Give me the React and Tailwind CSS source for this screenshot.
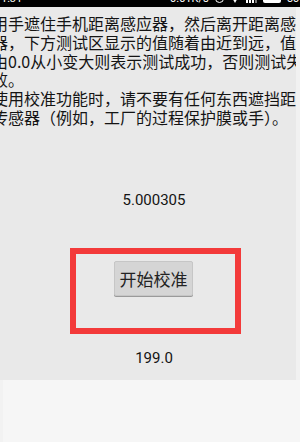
export default function App() {
  const lines = [
    "用手遮住手机距离感应器，然后离开距离感应",
    "器，下方测试区显示的值随着由近到远，值",
    "由0.0从小变大则表示测试成功，否则测试失",
    "败。",
    "使用校准功能时，请不要有任何东西遮挡距离",
    "传感器（例如，工厂的过程保护膜或手）。",
  ];
  return (
    <div className="w-[300px] h-[442px] overflow-hidden bg-[#e9e9e9] flex flex-col font-['Noto_Sans_CJK_SC','Noto_Sans',sans-serif] text-[#141414]">
      <div className="h-[7px] bg-black overflow-hidden flex justify-between items-start px-[1px] text-white">
        <span className="-mt-[7px] text-[11px] leading-[11px] font-['Roboto',sans-serif]">1:31</span>
        <div className="-mt-[7px] flex items-start gap-[6px] text-[11px] leading-[11px] font-['Roboto',sans-serif]">
          <span>0.01K/s</span>
          <span className="w-[9px] h-[9px] rounded-full border border-white mt-[1px]"></span>
          <span className="w-0 h-0 border-l-[5px] border-r-[5px] border-t-[9px] border-l-transparent border-r-transparent border-t-white mt-[1px]"></span>
          <span className="flex items-end gap-[1px] h-[10px]">
            <span className="w-[2px] h-[3px] bg-white"></span>
            <span className="w-[2px] h-[5px] bg-white"></span>
            <span className="w-[2px] h-[7px] bg-white"></span>
            <span className="w-[2px] h-[10px] bg-[#777]"></span>
          </span>
          <span className="w-[18px] h-[9px] rounded-[2px] bg-white mt-[1px]"></span>
          <span>56</span>
        </div>
      </div>
      <div className="h-[373px] flex">
        <div className="flex-1 flex flex-col overflow-hidden">
          <div className="pt-[7px] text-[16px] leading-[18.8px]">
            {lines.map((l, i) => (
              <div key={i} className="whitespace-nowrap -ml-[8px]">{l}</div>
            ))}
          </div>
          <div className="mt-[63px] h-[20px] leading-[20px] text-[15px] text-center pl-[12px] font-['Roboto',sans-serif]">5.000305</div>
          <div className="mt-[38px] ml-[70px] w-[171px] h-[86px] border-[6px] border-[#f33a3a] pt-[7px] pl-[38px]">
            <div className="w-[79px] h-[35px] bg-[#d5d5d5] rounded-[2px] border border-[#c6c6c6] shadow-[0_1px_0_#9a9a9a] flex items-center justify-center text-[17px] text-[#222]">开始校准</div>
          </div>
          <div className="mt-[14px] h-[20px] leading-[20px] text-[15px] text-center pl-[12px] font-['Roboto',sans-serif]">199.0</div>
        </div>
        <div className="w-[4px] bg-[#f1f1f1]"></div>
      </div>
      <div className="flex-1 flex">
        <div className="w-[3px] bg-[#f2f2f2]"></div>
        <div className="flex-1 bg-[#f6f6f6]"></div>
      </div>
    </div>
  );
}
